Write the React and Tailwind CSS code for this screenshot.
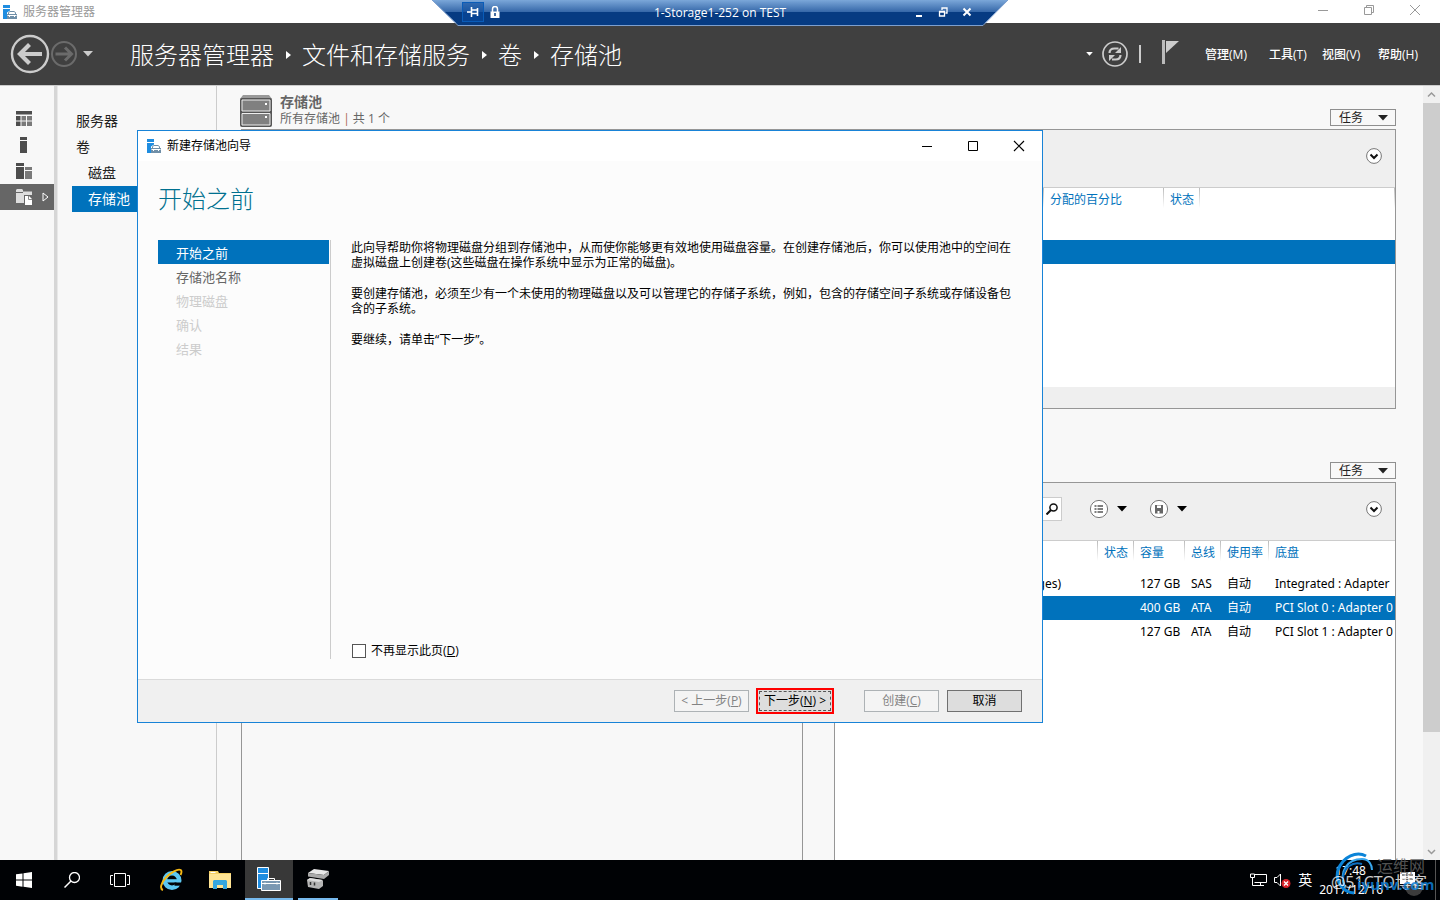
import React from "react";

function ServerIcon({ className }) {
  return (
    <svg viewBox="0 0 14 14" className={className} aria-hidden="true">
      <path d="M0 0h7v3H0z" fill="#1f8de0" />
      <path d="M0 4h7v1.500L4 7.500V14H0z" fill="#1f8de0" />
      <path d="M4 9h10v5H4z" fill="#6f8fa8" />
      <path d="M5.500 9V7.500l1.500-1h4l1.500 1V9" fill="none" stroke="#6f8fa8" />
      <path d="M4.500 10.500h9M6.500 10v2M11.500 10v2" fill="none" stroke="#fff" />
    </svg>
  );
}

function Crumb() {
  return (
    <svg viewBox="0 0 6 8" className="h-2 w-1.5" aria-hidden="true">
      <path d="M1 0l5 4-5 4z" fill="#fff" />
    </svg>
  );
}

function Caret({ className }) {
  return (
    <svg viewBox="0 0 10 6" className={className} aria-hidden="true">
      <path d="M0 0h10L5 5.500z" fill="currentColor" />
    </svg>
  );
}

function RemoteBar() {
  return (
    <div className="absolute left-1/2 top-0 z-20 h-[26px] w-[576px] -translate-x-1/2">
      <svg viewBox="0 0 576 26" className="absolute inset-0 h-full w-full" aria-hidden="true">
        <defs>
          <linearGradient id="gloss" x1="0" y1="0" x2="0" y2="1">
            <stop offset="0" stopColor="#7ba7d9" />
            <stop offset="0.480" stopColor="#3567a8" />
            <stop offset="0.490" stopColor="#063b82" />
            <stop offset="1" stopColor="#063b82" />
          </linearGradient>
        </defs>
        <path d="M0 0h576L551 25H26z" fill="url(#gloss)" />
        <path d="M0 0L26 25.500H551L576 0" fill="none" stroke="#7d9fce" />
      </svg>
      <div className="relative flex h-6 items-center pl-[30px] pr-9 text-white">
        <button aria-label="固定" className="flex h-5 w-[22px] items-center justify-center border border-[#0a5cb8] bg-[#084a9c]/60">
          <svg viewBox="0 0 12 10" className="h-2.5 w-3">
            <path d="M0 5h4M4.500 0v10M5 3h5M5 6.500h5M10.500 1v8" stroke="#fff" strokeWidth="1.600" fill="none" />
          </svg>
        </button>
        <svg viewBox="0 0 10 12" className="ml-1.5 h-3 w-2.5" aria-hidden="true">
          <path d="M2.500 6V3a2.500 2.500 0 015 0v3" fill="none" stroke="#fff" strokeWidth="1.500" />
          <path d="M.5 5.500h9V12h-9z" fill="#fff" />
          <path d="M5 7v3" stroke="#063b82" strokeWidth="1.500" />
        </svg>
        <span className="flex-1 pl-[26px] pt-0.5 text-center text-xs">1-Storage1-252 on TEST</span>
        <div className="flex items-center gap-3.5">
          <button aria-label="最小化连接">
            <svg viewBox="0 0 10 10" className="h-2.5 w-2.5"><path d="M2 9h6" stroke="#fff" strokeWidth="2" /></svg>
          </button>
          <button aria-label="还原连接">
            <svg viewBox="0 0 10 10" className="h-2.5 w-2.5">
              <path d="M1.500 5h5v4h-5zM1 4.500h6M4 3V1h5v5H7.500M4 1h5" fill="none" stroke="#fff" strokeWidth="1.300" />
            </svg>
          </button>
          <button aria-label="关闭连接">
            <svg viewBox="0 0 10 10" className="h-2.5 w-2.5"><path d="M1.500 1.500l7 7M8.500 1.500l-7 7" stroke="#fff" strokeWidth="2" /></svg>
          </button>
        </div>
      </div>
    </div>
  );
}

function TitleBar() {
  return (
    <div className="flex h-[23px] items-center bg-white pl-[3px] pr-[19px] text-[#999]">
      <ServerIcon className="h-3.5 w-3.5" />
      <span className="ml-1.5 flex-1 text-xs">服务器管理器</span>
      <div className="flex items-center gap-[34px] pb-1">
        <button aria-label="最小化"><svg viewBox="0 0 12 12" className="h-3 w-3"><path d="M1 6.500h10" stroke="#999" /></svg></button>
        <button aria-label="还原"><svg viewBox="0 0 12 12" className="h-3 w-3"><path d="M1.500 3.500h7v7h-7zM3.500 3.500v-2h7v7h-2" fill="none" stroke="#999" /></svg></button>
        <button aria-label="关闭"><svg viewBox="0 0 12 12" className="h-3 w-3"><path d="M1 1l10 10M11 1L1 11" stroke="#999" /></svg></button>
      </div>
    </div>
  );
}

function Header() {
  return (
    <header className="flex h-[62px] items-center bg-[#404040] pl-2.5 pr-[22px] text-white">
      <button aria-label="后退">
        <svg viewBox="0 0 40 40" className="h-10 w-10">
          <circle cx="20" cy="20" r="18" fill="none" stroke="#ccc" strokeWidth="2.400" />
          <path d="M9 20h23M19.500 10.500L10 20l9.500 9.500" fill="none" stroke="#ccc" strokeWidth="4.200" />
        </svg>
      </button>
      <button aria-label="前进">
        <svg viewBox="0 0 28 28" className="h-7 w-7">
          <circle cx="14" cy="14" r="12" fill="none" stroke="#6b6b6b" strokeWidth="2" />
          <path d="M5.500 14H21M15 7.500l6.500 6.500-6.500 6.500" fill="none" stroke="#6b6b6b" strokeWidth="3" />
        </svg>
      </button>
      <button aria-label="历史记录" className="ml-[5px] text-[#ccc]"><Caret className="h-1.5 w-2.5" /></button>
      <nav className="ml-[37px] flex flex-1 items-center gap-[11px] pt-0.5 text-2xl font-light">
        <a href="#manager">服务器管理器</a>
        <Crumb />
        <a href="#files">文件和存储服务</a>
        <Crumb />
        <a href="#volumes">卷</a>
        <Crumb />
        <a href="#pools">存储池</a>
      </nav>
      <Caret className="h-1 w-[7px]" />
      <button aria-label="刷新" className="ml-[9px]">
        <svg viewBox="0 0 26 26" className="h-[26px] w-[26px]">
          <circle cx="13" cy="13" r="12" fill="none" stroke="#ccc" strokeWidth="1.700" />
          <path d="M7.500 12c0-3 2-4.500 5-4.500h4M18.500 14c0 3-2 4.500-5 4.500H10" fill="none" stroke="#ccc" strokeWidth="2.200" />
          <path d="M19 6v6h-6zM7 20v-6h6z" fill="#ccc" />
        </svg>
      </button>
      <span className="ml-[11px] h-[18px] w-0.5 bg-[#ccc]" />
      <button aria-label="通知" className="ml-5 pb-1">
        <svg viewBox="0 0 18 24" className="h-6 w-[18px]">
          <path d="M1 0h3v24H1z" fill="#bbb" />
          <path d="M5 1h13L5 13z" fill="#ccc" />
        </svg>
      </button>
      <div className="ml-[26px] flex items-center pt-0.5 text-xs font-medium">
        <button className="w-16 text-left">管理(M)</button>
        <button className="w-[53px] text-left">工具(T)</button>
        <button className="w-14 text-left">视图(V)</button>
        <button>帮助(H)</button>
      </div>
    </header>
  );
}

function Rail() {
  return (
    <div className="w-[54px] shrink-0 pt-5">
      <button aria-label="仪表板" className="flex h-[26px] w-full items-center pl-4">
        <svg viewBox="0 0 16 16" className="h-4 w-4">
          <path d="M0 0h16v3.500H0z" fill="#4d4d4d" />
          <path d="M0 5h4.500v4.500H0zM0 10.500h4.500V15H0z" fill="#4d4d4d" />
          <path d="M5.500 5h4.500v4.500H5.500zM11 5h5v4.500h-5zM5.500 10.500h4.500V15H5.500zM11 10.500h5V15h-5z" fill="#7a7a7a" />
        </svg>
      </button>
      <button aria-label="本地服务器" className="flex h-[26px] w-full items-center pl-4">
        <svg viewBox="0 0 16 16" className="h-4 w-4"><path d="M4 0h7v3H4zM4 4h7v12H4z" fill="#4d4d4d" /></svg>
      </button>
      <button aria-label="所有服务器" className="flex h-[26px] w-full items-center pl-4">
        <svg viewBox="0 0 16 16" className="h-4 w-4">
          <path d="M0 0h8v3H0zM0 4h8v12H0z" fill="#4d4d4d" />
          <path d="M9 4h7v3H9zM9 8h7v8H9z" fill="#7a7a7a" />
        </svg>
      </button>
      <button aria-label="文件和存储服务" className="flex h-[26px] w-full items-center bg-[#666] pl-4">
        <svg viewBox="0 0 16 16" className="h-4 w-4">
          <path d="M0 1l1-1h5l1 1v1.500h9V6H8v8H0V4h7V3H0z" fill="#ddd" />
          <path d="M9 7h4l3 3v6H9z" fill="#fff" />
          <path d="M12.500 7v3.500H16" fill="none" stroke="#888" />
        </svg>
        <svg viewBox="0 0 7 10" className="ml-2.5 h-2.5 w-[7px]"><path d="M1 1l5 4-5 4z" fill="none" stroke="#fff" /></svg>
      </button>
    </div>
  );
}

function SideNav() {
  return (
    <nav className="w-[159px] shrink-0 border-r border-[#ccc] pl-3.5 pt-[22px] text-sm text-[#222]">
      <a href="#servers" className="flex h-[26px] items-center pl-1">服务器</a>
      <a href="#volumes" className="flex h-[26px] items-center pl-1">卷</a>
      <a href="#disks" className="flex h-[26px] items-center pl-4">磁盘</a>
      <a href="#pools" className="flex h-[26px] items-center bg-[#0072bc] pl-4 text-white">存储池</a>
    </nav>
  );
}

function TaskButton() {
  return (
    <button className="flex h-[17px] w-[66px] items-center justify-between border border-[#8f8f8f] bg-[#f8f8f8] pl-2 pr-[7px] text-xs text-[#222]">
      任务
      <Caret className="h-1.5 w-2.5" />
    </button>
  );
}

function ExpandButton({ className = "" }) {
  return (
    <button aria-label="展开" className={className}>
      <svg viewBox="0 0 16 16" className="h-4 w-4">
        <circle cx="8" cy="8" r="7.400" fill="#fff" stroke="#777" />
        <path d="M4.500 6.500L8 10l3.500-3.500" fill="none" stroke="#111" strokeWidth="2" />
      </svg>
    </button>
  );
}

function Th({ children, last = false }) {
  return (
    <th
      className={
        last
          ? "h-6 pl-1.5 text-left font-normal text-[#0072bc]"
          : "h-6 bg-[linear-gradient(to_bottom,#bbb,#fff)] bg-[length:1px_20px] bg-[position:right_top] bg-no-repeat pl-1.5 text-left font-normal text-[#0072bc]"
      }
    >
      {children}
    </th>
  );
}

function PoolsPanel() {
  return (
    <section>
      <div className="flex h-[43px] items-start justify-between">
        <div className="flex pt-2">
          <svg viewBox="0 0 32 33" className="h-[33px] w-8" aria-hidden="true">
            <path d="M3 1h26l3 4H0z" fill="#999" />
            <rect x="0" y="4" width="32" height="29" rx="2" fill="#555" />
            <path d="M2 6h28v11H2zM2 19.500h28V31H2z" fill="#808080" stroke="#eee" />
            <path d="M25 9h2v2h-2zM25 22h2v2h-2z" fill="#fff" />
          </svg>
          <div className="ml-2 text-[#666]">
            <h2 className="text-sm font-bold leading-4">存储池</h2>
            <p className="text-xs leading-[17px]">所有存储池 <span className="text-[#a65]">|</span> 共 1 个</p>
          </div>
        </div>
        <div className="pt-[23px]"><TaskButton /></div>
      </div>
      <div className="ml-px border border-[#969696] bg-white">
        <div className="flex h-[58px] items-center justify-end border-b border-[#ccc] bg-[#efefef] pb-[5px] pr-[13px]">
          <ExpandButton />
        </div>
        <table className="w-full table-fixed text-xs">
          <colgroup>
            <col />
            <col className="w-[120px]" />
            <col className="w-9" />
            <col className="w-[195px]" />
          </colgroup>
          <thead><tr><Th /><Th>分配的百分比</Th><Th>状态</Th><Th /></tr></thead>
          <tbody>
            <tr className="h-7"><td colSpan={4} /></tr>
            <tr className="h-6 bg-[#0072bc]"><td colSpan={4} /></tr>
          </tbody>
        </table>
        <div className="mt-[123px] h-[21px] bg-[#efefef]" />
      </div>
    </section>
  );
}

const disks = [
  { name: "(Images)", size: "127 GB", bus: "SAS", usage: "自动", chassis: "Integrated : Adapter", selected: false },
  { name: "", size: "400 GB", bus: "ATA", usage: "自动", chassis: "PCI Slot 0 : Adapter 0", selected: true },
  { name: "", size: "127 GB", bus: "ATA", usage: "自动", chassis: "PCI Slot 1 : Adapter 0", selected: false },
];

function DisksPanel() {
  return (
    <section className="flex min-w-0 flex-col">
      <div className="mb-[3px] flex justify-end"><TaskButton /></div>
      <div className="flex-1 border border-b-0 border-[#969696] bg-white">
        <div className="flex h-[58px] items-center justify-end border-b border-[#ccc] bg-[#efefef] pb-[5px] pr-[13px]">
          <button aria-label="搜索" className="mr-[27px] flex h-6 w-7 items-center justify-end border border-[#ccc] bg-white pr-[3px]">
            <svg viewBox="0 0 12 12" className="h-3 w-3"><circle cx="7.500" cy="4.500" r="3.600" fill="none" stroke="#111" strokeWidth="1.500" /><path d="M5 7L.5 11.500" stroke="#111" strokeWidth="2" /></svg>
          </button>
          <button aria-label="列表选项" className="flex w-[60px] items-center gap-2 text-black">
            <svg viewBox="0 0 20 20" className="h-5 w-5">
              <circle cx="10" cy="10" r="8.600" fill="#fff" stroke="#777" />
              <path d="M5.500 7h2M5.500 10h2M5.500 13h2M8.500 7H14M8.500 10H14M8.500 13H14" stroke="#555" strokeWidth="1.700" />
            </svg>
            <Caret className="h-1.5 w-2.5" />
          </button>
          <button aria-label="保存选项" className="flex items-center gap-2 text-black">
            <svg viewBox="0 0 20 20" className="h-5 w-5">
              <circle cx="10" cy="10" r="8.600" fill="#fff" stroke="#777" />
              <path d="M6 6h8v8.500H6z" fill="#666" />
              <path d="M8 6.500h4V9H8zM8.500 12h2v2.500h-2z" fill="#fff" />
            </svg>
            <Caret className="h-1.5 w-2.5" />
          </button>
          <ExpandButton className="ml-[179px]" />
        </div>
        <table className="w-full table-fixed font-['Noto_Sans','Noto_Sans_CJK_SC',sans-serif] text-xs text-black">
          <colgroup>
            <col />
            <col className="w-9" />
            <col className="w-[51px]" />
            <col className="w-9" />
            <col className="w-12" />
            <col className="w-[126px]" />
          </colgroup>
          <thead>
            <tr><Th /><Th>状态</Th><Th>容量</Th><Th>总线</Th><Th>使用率</Th><Th last>底盘</Th></tr>
          </thead>
          <tbody>
            <tr className="h-[7px]"><td colSpan={6} /></tr>
            {disks.map((d, i) => (
              <tr key={i} className={d.selected ? "h-6 whitespace-nowrap bg-[#0072bc] text-white" : "h-6 whitespace-nowrap"}>
                <td className="pr-[37px] text-right">{d.name}</td>
                <td />
                <td className="pl-1.5">{d.size}</td>
                <td className="pl-1.5">{d.bus}</td>
                <td className="pl-1.5">{d.usage}</td>
                <td className="overflow-hidden pl-1.5">{d.chassis}</td>
              </tr>
            ))}
          </tbody>
        </table>
      </div>
    </section>
  );
}

function Scrollbar() {
  return (
    <div className="flex w-[17px] shrink-0 flex-col items-center bg-[#f0f0f0]" aria-hidden="true">
      <svg viewBox="0 0 17 17" className="h-[17px] w-[17px]"><path d="M5 10.500L8.500 7l3.500 3.500" fill="none" stroke="#999" strokeWidth="1.500" /></svg>
      <div className="w-full grow-[629] bg-[#cdcdcd]" />
      <div className="w-full grow-[111]" />
      <svg viewBox="0 0 17 17" className="h-[17px] w-[17px]"><path d="M5 7l3.500 3.500L12 7" fill="none" stroke="#999" strokeWidth="1.500" /></svg>
    </div>
  );
}

const steps = [
  { label: "开始之前", tone: "bg-[#0072bc] text-white" },
  { label: "存储池名称", tone: "text-[#666]" },
  { label: "物理磁盘", tone: "text-[#ccc]" },
  { label: "确认", tone: "text-[#ccc]" },
  { label: "结果", tone: "text-[#ccc]" },
];

function Wizard() {
  return (
    <div role="dialog" aria-labelledby="wizard-title" className="absolute left-[137px] top-[130px] z-10 flex h-[593px] w-[906px] flex-col border border-[#1883d7] bg-[#fcfcfc] text-xs text-black">
      <div className="flex h-[30px] items-center bg-white pl-[9px] pr-[17px]">
        <ServerIcon className="h-3.5 w-3.5" />
        <span id="wizard-title" className="ml-1.5 flex-1">新建存储池向导</span>
        <div className="flex items-center gap-[34px]">
          <button aria-label="最小化向导"><svg viewBox="0 0 12 12" className="h-3 w-3"><path d="M1 6.500h10" stroke="#000" /></svg></button>
          <button aria-label="最大化向导"><svg viewBox="0 0 12 12" className="h-3 w-3"><path d="M1.500 1.500h9v9h-9z" fill="none" stroke="#000" /></svg></button>
          <button aria-label="关闭向导"><svg viewBox="0 0 12 12" className="h-3 w-3"><path d="M1 1l10 10M11 1L1 11" stroke="#000" strokeWidth="1.200" /></svg></button>
        </div>
      </div>
      <h1 className="px-5 pb-[25px] pt-[22px] text-2xl font-light leading-8 text-[#00708f]">开始之前</h1>
      <div className="flex flex-1 pb-5 pl-5 pr-[30px]">
        <ol className="w-[173px] shrink-0 border-r border-[#ccc] pr-px text-[13px]">
          {steps.map((s) => (
            <li key={s.label} className={"flex h-6 items-center pl-[18px] pt-1 " + s.tone}>{s.label}</li>
          ))}
        </ol>
        <div className="ml-5 flex flex-1 flex-col">
          <div className="flex flex-col gap-4 leading-[15px]">
            <p>此向导帮助你将物理磁盘分组到存储池中，从而使你能够更有效地使用磁盘容量。在创建存储池后，你可以使用池中的空间在虚拟磁盘上创建卷(这些磁盘在操作系统中显示为正常的磁盘)。</p>
            <p>要创建存储池，必须至少有一个未使用的物理磁盘以及可以管理它的存储子系统，例如，包含的存储空间子系统或存储设备包含的子系统。</p>
            <p>要继续，请单击“下一步”。</p>
          </div>
          <label className="mt-auto flex items-center gap-[5px] pl-px leading-4">
            <input type="checkbox" className="h-3.5 w-3.5 appearance-none border border-[#555] bg-white" />
            <span>不再显示此页(<u>D</u>)</span>
          </label>
        </div>
      </div>
      <div className="flex h-[43px] items-center justify-end border-t border-[#dadada] bg-[#f0f0f0] pr-5">
        <button disabled className="h-[22px] w-[75px] border border-[#adb2b5] bg-[#f4f4f4] text-[#838383]">&lt; 上一步(<u>P</u>)</button>
        <button className="ml-[7px] h-[26px] w-[78px] border-2 border-[#f00] bg-[#ddd] p-px">
          <span className="flex h-full items-center justify-center whitespace-pre border border-dashed border-[#555]">下一步(<u>N</u>) &gt;</span>
        </button>
        <button disabled className="ml-[30px] h-[22px] w-[75px] border border-[#adb2b5] bg-[#f4f4f4] text-[#838383]">创建(<u>C</u>)</button>
        <button className="ml-2 h-[22px] w-[75px] border border-[#707070] bg-[#ddd]">取消</button>
      </div>
    </div>
  );
}

function Taskbar() {
  const item = "flex h-10 w-12 items-center justify-center ";
  return (
    <footer className="relative flex h-10 shrink-0 bg-[#000205] text-white">
      <button aria-label="开始" className={item}>
        <svg viewBox="0 0 16 16" className="h-4 w-4"><path d="M0 2.300L6.500 1.400v6.200H0zM7.500 1.200L16 0v7.600H7.500zM0 8.500h6.500v6.200L0 13.800zM7.500 8.500H16V16l-8.500-1.200z" fill="#fff" /></svg>
      </button>
      <button aria-label="搜索应用" className={item}>
        <svg viewBox="0 0 16 16" className="h-4 w-4"><circle cx="10.500" cy="5.500" r="5" fill="none" stroke="#fff" strokeWidth="1.300" /><path d="M7 9L.5 15.500" stroke="#fff" strokeWidth="1.500" /></svg>
      </button>
      <button aria-label="任务视图" className={item}>
        <svg viewBox="0 0 20 14" className="h-3.5 w-5"><path d="M4.500.5h11v13h-11zM3 2.500H.5v9H3M17 2.500h2.500v9H17" fill="none" stroke="#fff" /></svg>
      </button>
      <button aria-label="Internet Explorer" className={item + "ml-[3px]"}>
        <svg viewBox="0 0 24 24" className="h-6 w-6">
          <circle cx="13" cy="12.500" r="7.200" fill="none" stroke="#5cc8f2" strokeWidth="4.600" />
          <path d="M8 11.200h14v3.300H8z" fill="#5cc8f2" />
          <path d="M15.500 14.500H24v3.200h-8.500z" fill="#000205" />
          <path d="M4 22c-3.500-1-2-7 2.500-12C11.500 4.500 19 .3 21.700 2c1.300 1 .8 3-.2 5" fill="none" stroke="#f5b915" strokeWidth="1.900" />
        </svg>
      </button>
      <button aria-label="文件资源管理器" className={item + "ml-px"}>
        <svg viewBox="0 0 22 20" className="h-5 w-[22px]">
          <path d="M0 1h9l1 2h12v15H0z" fill="#f5cf63" />
          <path d="M0 4h22v14H0z" fill="#ffe494" />
          <path d="M4 19v-8l1-1h12l1 1v8h-4v-4H8v4z" fill="#35a7e0" />
          <path d="M1.500 2.500h5" stroke="#fff" />
        </svg>
      </button>
      <button aria-label="服务器管理器窗口" className={item + "ml-px border-b-2 border-[#76b9ed] bg-[#383838]"}>
        <svg viewBox="0 0 24 24" className="h-6 w-6">
          <path d="M.5.5h11v6H.5zM.5 6.500h11v15H.5z" fill="#1f8de0" stroke="#fff" />
          <path d="M4.500 13.500h19v10h-19z" fill="#7a98b3" stroke="#fff" />
          <path d="M10.500 13v-1.500h7V13M5 16.500h18M8 15.500v2M20 15.500v2" fill="none" stroke="#fff" />
        </svg>
      </button>
      <button aria-label="存储设备" className="ml-[5px] flex h-10 w-10 items-center justify-center border-b-2 border-[#76b9ed]">
        <svg viewBox="0 0 22 20" className="h-5 w-[22px]">
          <path d="M1 4l6-4 15 2-5 4z" fill="#e8e8e8" />
          <path d="M1 4l16 2v4L1 7.500zM17 6l5-4v4l-5 4z" fill="#aaa" />
          <path d="M0 11l3-2 12 2 1 1v5l-4 3-11-2z" fill="#b5b5b5" />
          <path d="M0 11l3-2 13 2-4 2z" fill="#ddd" />
          <path d="M3.500 13v3M7.500 13.500v3" stroke="#333" strokeWidth="1.500" />
        </svg>
      </button>
      <div className="ml-auto flex items-center pr-[57px]">
        <svg viewBox="0 0 17 14" className="h-3.5 w-[17px]" aria-hidden="true"><path d="M4.500 1.500h12v8h-12M.5 1h4v3.500h-4zM2.500 5v7.500H14M10.500 10v3" fill="none" stroke="#fff" /></svg>
        <svg viewBox="0 0 17 15" className="ml-[7px] h-[15px] w-[17px]" aria-hidden="true">
          <path d="M.5 4.500H3l3.500-3.500v12L3 9.500H.5z" fill="none" stroke="#fff" />
          <circle cx="12" cy="10.500" r="4.500" fill="#d8222a" />
          <path d="M10 8.500l4 4M14 8.500l-4 4" stroke="#fff" strokeWidth="1.300" />
        </svg>
        <span className="ml-[7px] text-sm">英</span>
        <div className="ml-[7px] flex flex-col items-end font-['Noto_Sans',sans-serif] text-xs leading-[19px]">
          <span className="pr-[17px]">17:48</span>
          <span>2017/12/16</span>
        </div>
      </div>
      <div className="absolute bottom-0 right-1 h-10 border-l border-[#555]" />
      <div className="absolute -top-2 right-[5px] h-12 w-[104px]">
        <svg viewBox="0 0 104 48" className="absolute inset-0 h-full w-full" aria-hidden="true">
          <circle cx="83" cy="35" r="9" fill="#3c3c3c" />
          <path d="M69 20h15v12H69z" fill="#fff" />
          <path d="M71 23h11M71 27h11M76 21v9" stroke="#222" />
          <path d="M23 41A18 18 0 0 1 7 18C12 4 26-1 35 4" fill="none" stroke="#0b84d8" strokeWidth="3" />
          <path d="M14 35C7 19 17 7 31 7c7 0 10 6 10 11" fill="none" stroke="#37a7ee" strokeWidth="2" />
          <path d="M12 28C12 15 22 9 31 12" fill="none" stroke="#0b6fc0" strokeWidth="2" />
        </svg>
        <span className="absolute left-[46px] top-1 text-base leading-5 text-[#666]/80">运维网</span>
        <span className="absolute left-0 top-5 whitespace-nowrap text-base leading-5 text-white/80">@51CTO博客</span>
        <span className="absolute left-[26px] top-[22px] text-[15px] font-bold leading-5 text-[#0d7fd6]/85">iyunv.com</span>
      </div>
    </footer>
  );
}

export default function App() {
  return (
    <div className="relative flex min-h-screen flex-col overflow-hidden bg-[#f8f8f8] font-['Open_Sans','Noto_Sans_CJK_SC',sans-serif]" lang="zh-CN">
      <TitleBar />
      <RemoteBar />
      <Header />
      <main className="flex flex-1 border-t border-[#ccc]">
        <Rail />
        <div className="w-1 shrink-0 border-r border-[#e8e8e8] bg-[#d6d6d6]" />
        <SideNav />
        <div className="flex flex-1 flex-col pl-[23px] pr-[27px]">
          <PoolsPanel />
          <div className="ml-px mt-[53px] grid flex-1 grid-cols-2 gap-[31px]">
            <div className="mt-5 border border-b-0 border-[#969696]" />
            <DisksPanel />
          </div>
        </div>
        <Scrollbar />
      </main>
      <Taskbar />
      <Wizard />
    </div>
  );
}
